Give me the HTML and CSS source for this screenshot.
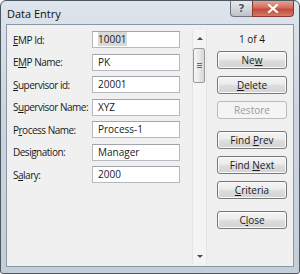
FILE: index.html
```html
<!DOCTYPE html>
<html lang="en">
<head>
<title>Data Entry</title>
<link rel="stylesheet" href="styles.css">
</head>
<body>

<div class="window">
    <div class="title-bar">
        <div class="title">Data Entry</div>
        <div class="caption">
            <div class="cap help">?</div>
            <div class="cap close">
                <svg width="12" height="9" viewBox="0 0 12 9">
                    <path d="M2 1 L10 8 M10 1 L2 8" stroke="#fff" stroke-width="2.2" stroke-linecap="square"/>
                </svg>
            </div>
        </div>
    </div>
    <div class="client">
        <div class="fields">
            <div class="row"><div class="label"><u>E</u>MP Id:</div><div class="field"><span class="sel">10001</span></div></div>
            <div class="row"><div class="label">E<u>M</u>P Name:</div><div class="field">PK</div></div>
            <div class="row"><div class="label"><u>S</u>upervisor id:</div><div class="field">20001</div></div>
            <div class="row"><div class="label">S<u>u</u>pervisor Name:</div><div class="field">XYZ</div></div>
            <div class="row"><div class="label">P<u>r</u>ocess Name:</div><div class="field">Process-1</div></div>
            <div class="row"><div class="label">Desi<u>g</u>nation:</div><div class="field">Manager</div></div>
            <div class="row"><div class="label">S<u>a</u>lary:</div><div class="field">2000</div></div>
        </div>
        <div class="scrollbar">
            <div class="arrow"><span class="tri up"></span></div>
            <div class="thumb"><span class="grip"></span></div>
            <div class="track"></div>
            <div class="arrow"><span class="tri down"></span></div>
        </div>
        <div class="actions">
            <div class="counter">1 of 4</div>
            <button class="btn">Ne<u>w</u></button>
            <button class="btn"><u>D</u>elete</button>
            <button class="btn" disabled>Restore</button>
            <button class="btn group">Find <u>P</u>rev</button>
            <button class="btn">Find <u>N</u>ext</button>
            <button class="btn"><u>C</u>riteria</button>
            <button class="btn group">C<u>l</u>ose</button>
        </div>
    </div>
</div>

</body>
</html>
```

FILE: styles.css
```css
body {
    margin: 0;
    background-color: #fff;
    font-family: "Open Sans", "Noto Sans", sans-serif;
    font-size: 10px;
    color: #1a1a1a;
}
.window {
    width: 300px;
    height: 274px;
    box-sizing: border-box;
    border: 1px solid #4e5660;
    border-radius: 6px 6px 3px 3px;
    background: linear-gradient(to bottom, #dde4ec 0%, #ccd5df 40%, #c4ced9 100%);
    display: flex;
    flex-direction: column;
    overflow: hidden;
}
.title-bar {
    height: 23px;
    display: flex;
    justify-content: space-between;
    align-items: flex-start;
}
.title {
    padding: 5px 0 0 6px;
    font-size: 11px;
    color: #111;
}
.caption {
    display: flex;
    margin-right: 5px;
}
.cap {
    height: 16px;
    box-sizing: border-box;
    border: 1px solid #6b7480;
    border-top: none;
    display: flex;
    align-items: center;
    justify-content: center;
}
.help {
    width: 22px;
    border-radius: 0 0 0 4px;
    border-right: none;
    background: linear-gradient(to bottom, #e6e9ed 0%, #d3d7dc 50%, #bcc2c9 100%);
    color: #4a5563;
    font-family: "DejaVu Sans", sans-serif;
    font-weight: bold;
    font-size: 11px;
    text-shadow: 0 0 2px #fff;
}
.close {
    width: 42px;
    border-radius: 0 0 4px 0;
    border-color: #8a3a34;
    background: linear-gradient(to bottom, #e7a294 0%, #d46c5c 45%, #c24a39 55%, #d47a66 100%);
}
.client {
    flex: 1;
    margin: 0 5px 6px 5px;
    border: 1px solid #8c98a6;
    background-color: #f0f0f0;
    display: flex;
}
.fields {
    padding: 6px 0 0 6px;
}
.row {
    display: flex;
    align-items: center;
    height: 17px;
    margin-bottom: 5.5px;
}
.label {
    width: 79px;
    white-space: nowrap;
    letter-spacing: -0.5px;
}
.field {
    width: 88px;
    height: 17px;
    box-sizing: border-box;
    border: 1px solid #b5b8be;
    border-top-color: #a2a5ab;
    background-color: #fff;
    padding-left: 5px;
    line-height: 15px;
}
.sel {
    background-color: #d9d9d9;
}
.scrollbar {
    width: 15px;
    margin: 5px 0 1px 12px;
    box-sizing: border-box;
    border-left: 1px solid #e4e4e4;
    border-right: 1px solid #e4e4e4;
    background-color: #f4f4f4;
    display: flex;
    flex-direction: column;
}
.arrow {
    height: 17px;
    display: flex;
    align-items: center;
    justify-content: center;
}
.tri {
    width: 0;
    height: 0;
    border-left: 3px solid transparent;
    border-right: 3px solid transparent;
}
.tri.up {
    border-bottom: 3px solid #4a4a4a;
}
.tri.down {
    border-top: 3px solid #4a4a4a;
}
.thumb {
    height: 35px;
    margin: 1px 1px 0 0;
    box-sizing: border-box;
    border: 1px solid #9a9a9a;
    border-radius: 2px;
    background: linear-gradient(to right, #f5f5f5 0%, #e9e9e9 50%, #d6d6d6 100%);
    display: flex;
    align-items: center;
    justify-content: center;
}
.grip {
    width: 5px;
    height: 5px;
    background: repeating-linear-gradient(to bottom, #6a6a6a 0, #6a6a6a 1px, transparent 1px, transparent 2px);
}
.track {
    flex: 1;
}
.actions {
    width: 70px;
    margin-left: 10px;
    padding-top: 6px;
    display: flex;
    flex-direction: column;
}
.counter {
    height: 17px;
    line-height: 17px;
    text-align: center;
}
.btn {
    appearance: none;
    -webkit-appearance: none;
    height: 18px;
    margin: 0;
    margin-top: 7px;
    padding: 0;
    box-sizing: border-box;
    border: 1px solid #777;
    border-radius: 3px;
    background: linear-gradient(to bottom, #f4f4f4 0%, #ececec 45%, #dedede 50%, #d2d2d2 100%);
    box-shadow: inset 0 0 0 1px #fafafa;
    font-family: "Open Sans", "Noto Sans", sans-serif;
    font-size: 10px;
    color: #1a1a1a;
    line-height: 14px;
}
.btn:first-of-type {
    margin-top: 3px;
}
.btn.group {
    margin-top: 12px;
}
.btn:disabled {
    border-color: #b9bcbf;
    background: #f4f4f4;
    box-shadow: none;
    color: #9a9a9a;
}
```
